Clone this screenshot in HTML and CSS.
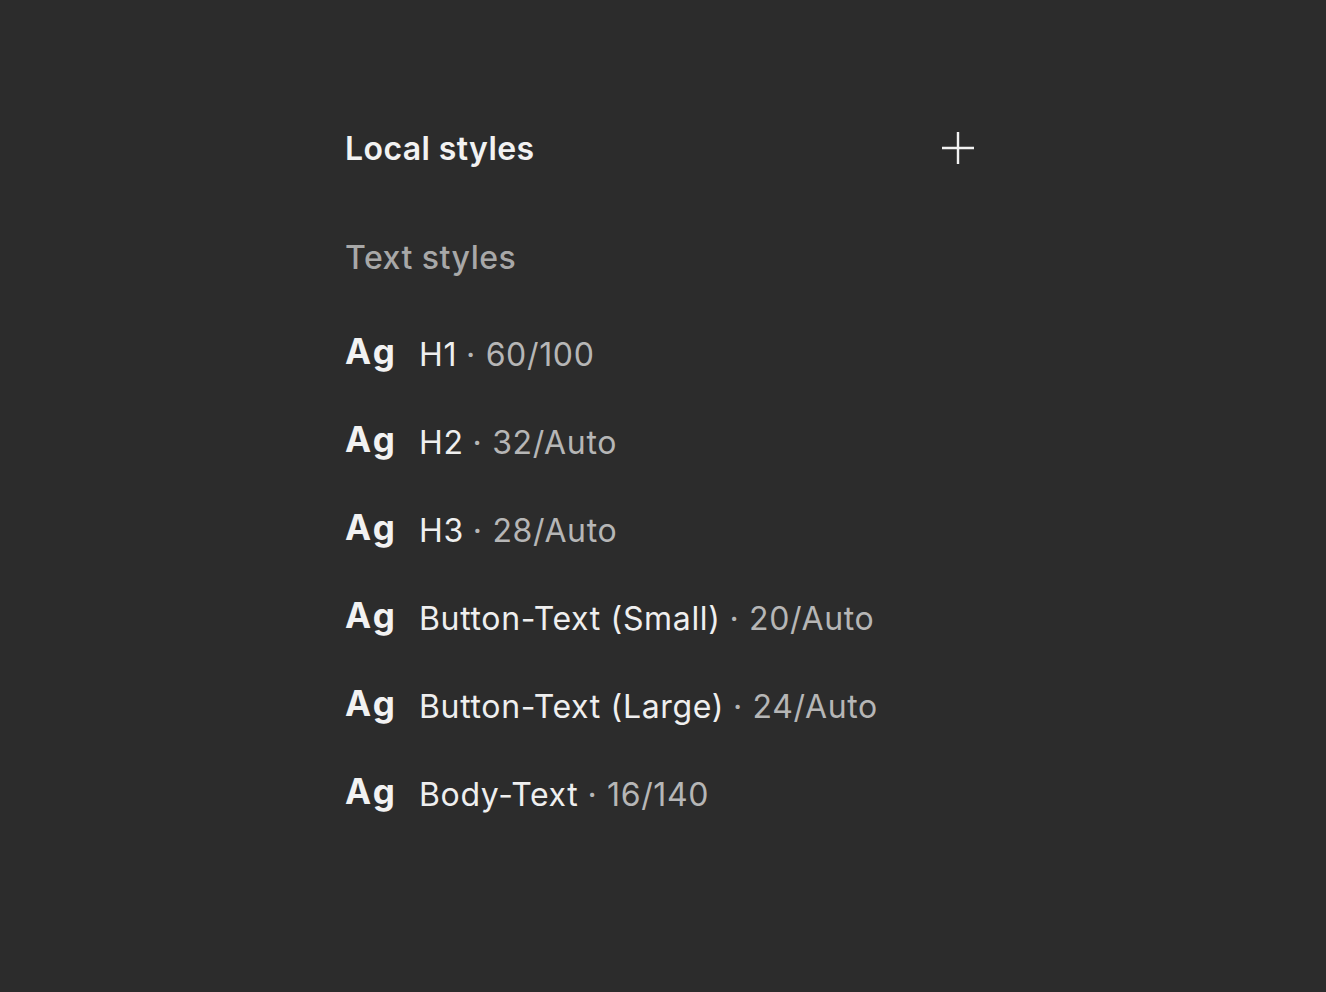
FILE: index.html
```html
<!DOCTYPE html>
<html>
<head>
  <title>Local styles</title>
  <meta charset="utf-8">
  <link rel="stylesheet" href="styles.css">
</head>
<body>
  <div class="panel">
    <div class="panelHeader">
      <span class="panelTitle">Local styles</span>
      <svg class="addBtn" width="34" height="34" viewBox="0 0 34 34">
        <path d="M17 1V33M1 17H33" stroke="#f2f2f2" stroke-width="2.4" fill="none"/>
      </svg>
    </div>
    <div class="sectionTitle">Text styles</div>
    <ul class="styleList">
      <li class="styleRow"><span class="sample">Ag</span><span class="styleName">H1</span><span class="styleSpec">· 60/100</span></li>
      <li class="styleRow"><span class="sample">Ag</span><span class="styleName">H2</span><span class="styleSpec">· 32/Auto</span></li>
      <li class="styleRow"><span class="sample">Ag</span><span class="styleName">H3</span><span class="styleSpec">· 28/Auto</span></li>
      <li class="styleRow"><span class="sample">Ag</span><span class="styleName">Button-Text (Small)</span><span class="styleSpec">· 20/Auto</span></li>
      <li class="styleRow"><span class="sample">Ag</span><span class="styleName">Button-Text (Large)</span><span class="styleSpec">· 24/Auto</span></li>
      <li class="styleRow"><span class="sample">Ag</span><span class="styleName">Body-Text</span><span class="styleSpec">· 16/140</span></li>
    </ul>
  </div>
</body>
</html>
```

FILE: styles.css
```css
body {
  margin: 0;
  background-color: #2c2c2c;
  font-family: Inter, "Noto Sans", sans-serif;
  color: #f2f2f2;
}

.panel {
  width: 630px;
  padding-top: 127px;
  padding-left: 345px;
}

.panelHeader {
  display: flex;
  justify-content: space-between;
  align-items: center;
  height: 42px;
}

.panelTitle {
  font-size: 32px;
  font-weight: 600;
  letter-spacing: 0.4px;
}

.sectionTitle {
  margin-top: 68px;
  font-size: 32px;
  font-weight: 500;
  letter-spacing: 0.5px;
  color: #a8a8a8;
  height: 42px;
  line-height: 42px;
}

.styleList {
  list-style: none;
  margin: 0;
  padding: 0;
  margin-top: 31px;
}

.styleRow {
  display: flex;
  align-items: center;
  height: 88px;
}

.sample {
  width: 74px;
  font-size: 35px;
  font-weight: 700;
  letter-spacing: 2.5px;
  margin-top: -6px;
}

.styleName {
  font-size: 32px;
  letter-spacing: 0.65px;
  color: #efefef;
}

.styleSpec {
  font-size: 32px;
  letter-spacing: 0.65px;
  color: #b6b6b6;
  margin-left: 9px;
}
```
